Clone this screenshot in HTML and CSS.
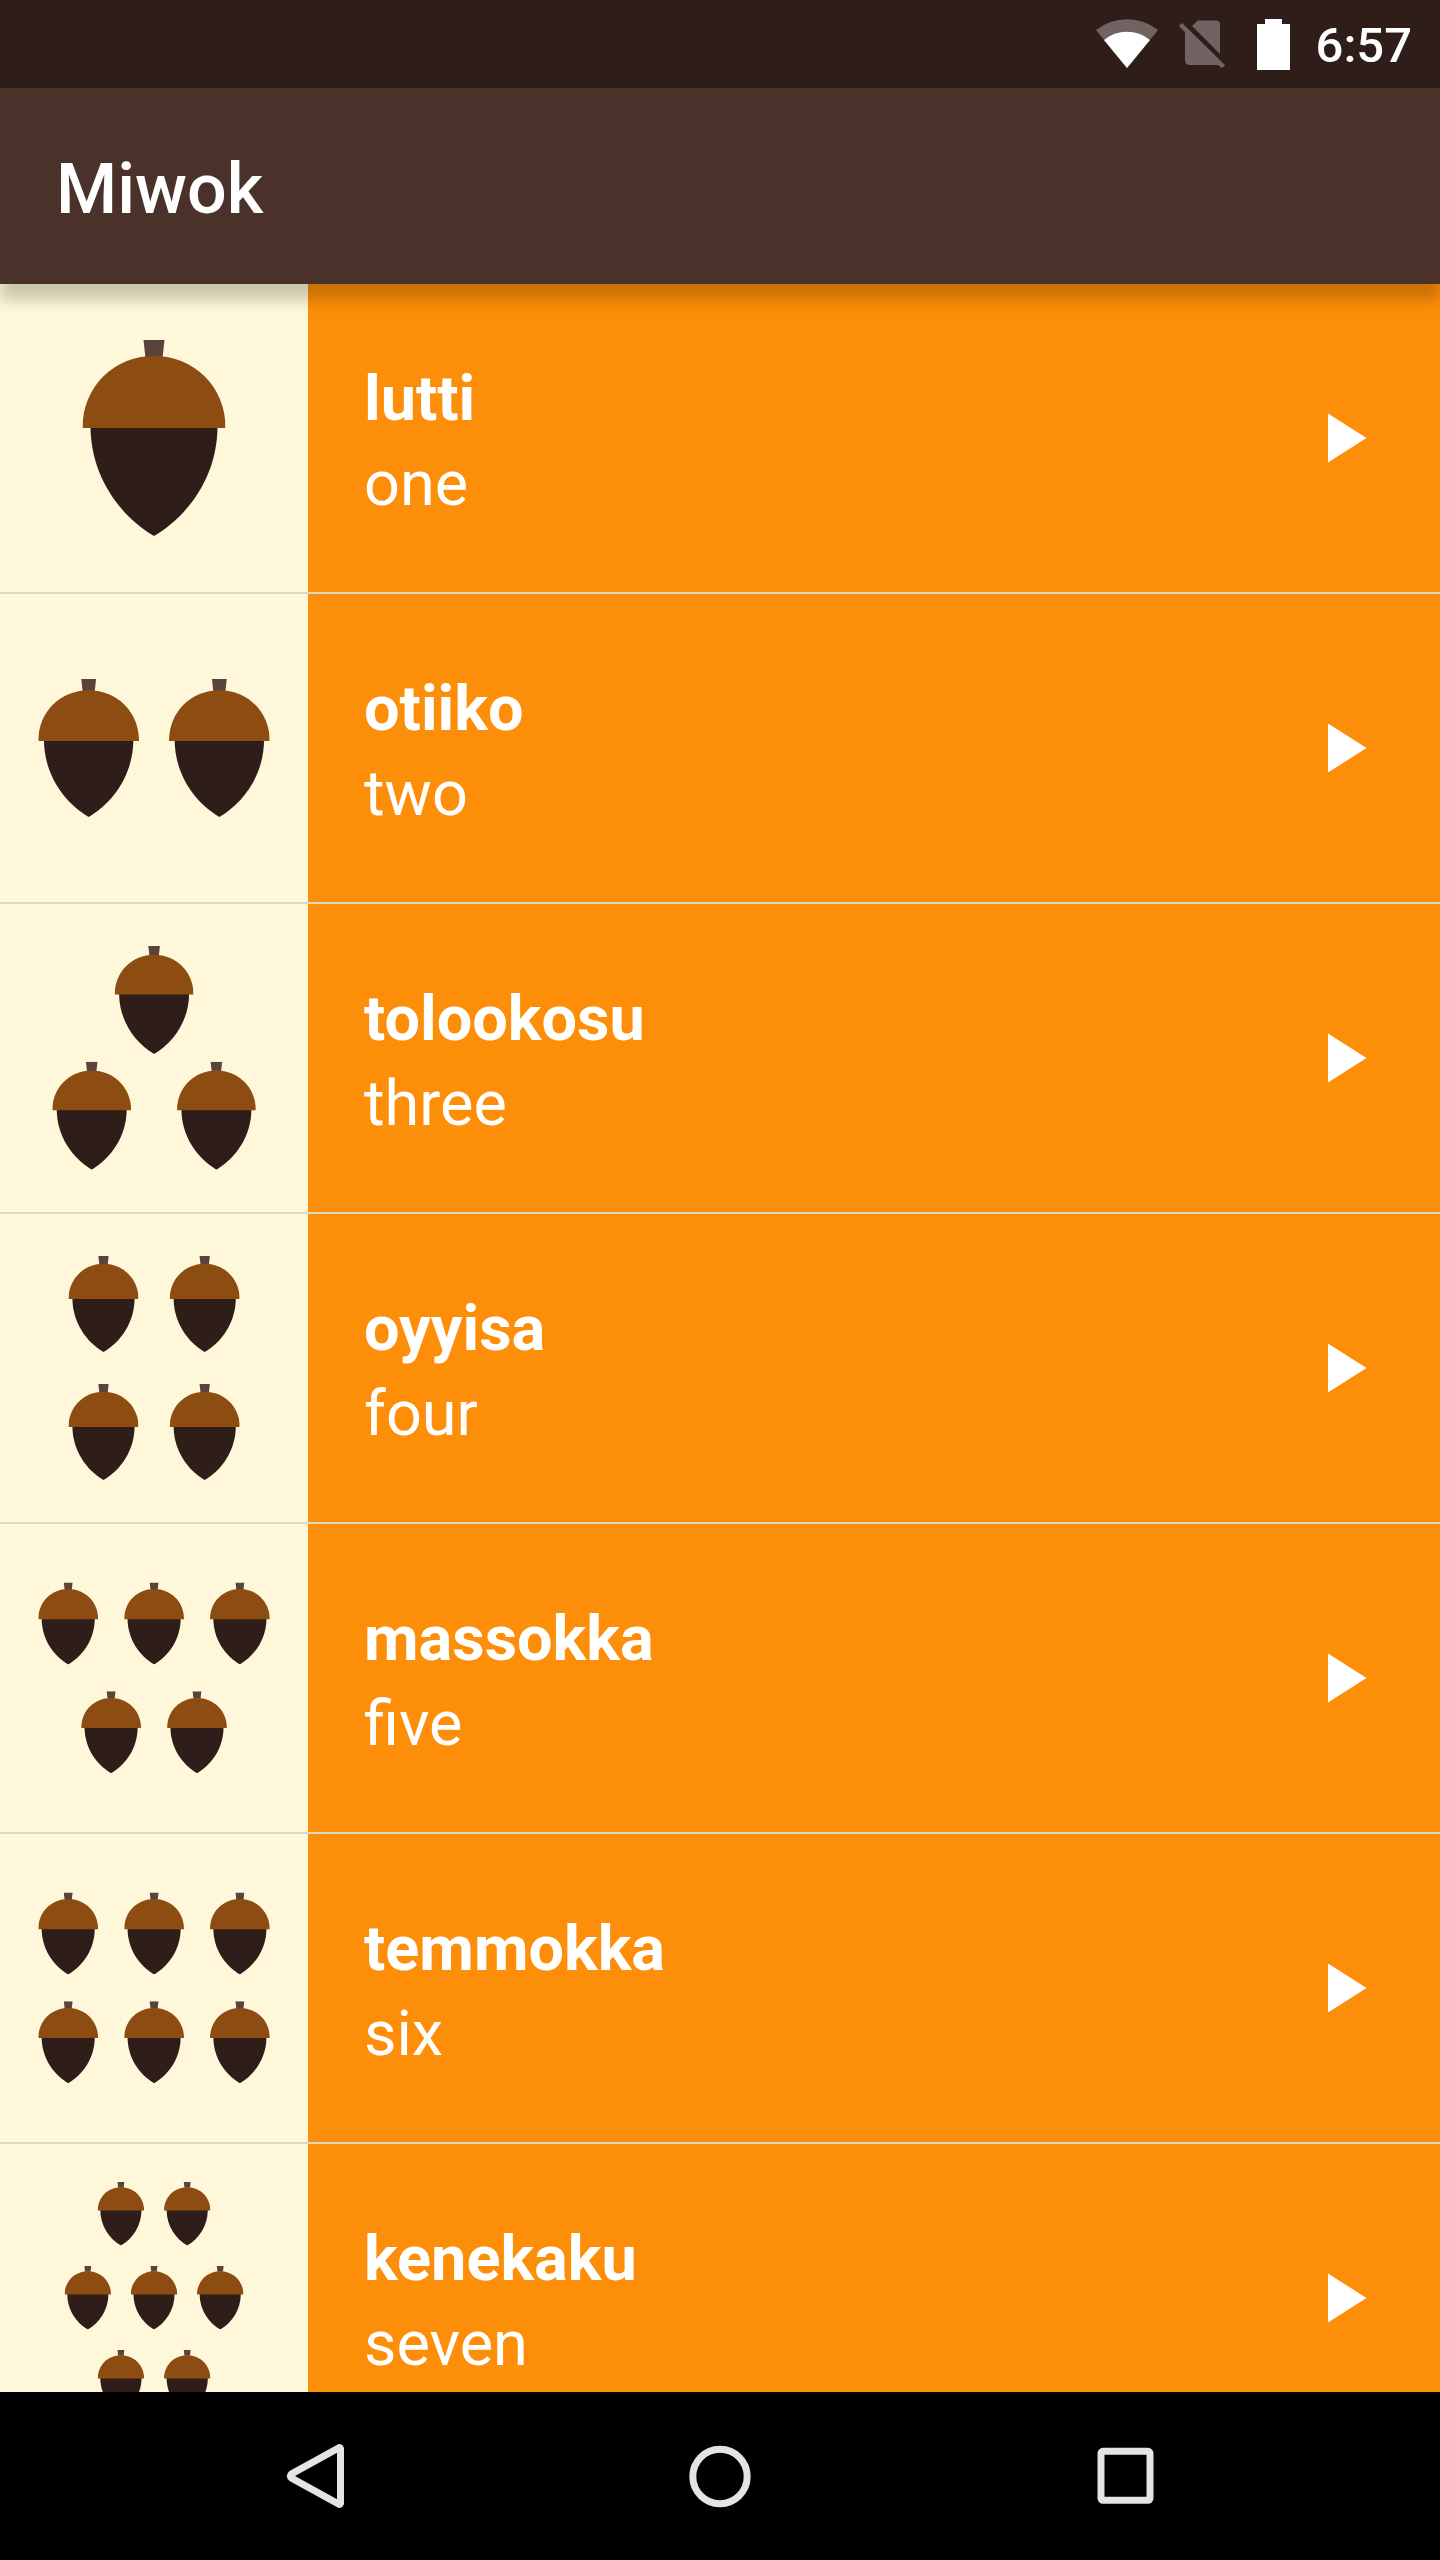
FILE: index.html
```html
<!DOCTYPE html>
<html lang="en">
<head>
<meta charset="utf-8">
<meta name="viewport" content="width=device-width, initial-scale=1">
<title>Miwok</title>
<link rel="stylesheet" href="styles.css">
</head>
<body>
<svg class="sprite" aria-hidden="true">
  <symbol id="acorn" viewBox="0 0 143 196">
    <path fill="#5a433d" d="M61 0h21l-2 18H63z"/>
    <path fill="#2f1d1a" d="M8 86h127c0 49-28 89-63.500 110C36 175 8 135 8 86z"/>
    <path fill="#8d4c12" d="M0 88C0 46 32 16 71.500 16S143 46 143 88z"/>
  </symbol>
  <symbol id="play" viewBox="0 0 24 24"><path fill="#fff" d="M8 5v14l11-7z"/></symbol>
</svg>

<div class="status-bar">
  <svg class="wifi" viewBox="0 0 62 50" aria-label="Wi-Fi">
    <path fill="#726363" d="M0 11A50 50 0 0 1 62 11L31 49z"/>
    <path fill="#fff" d="M8 21A36 36 0 0 1 54 21L31 49z"/>
  </svg>
  <svg class="sim" viewBox="0 0 46 48" aria-label="No SIM">
    <path fill="#726363" d="M3 3L0 6 6 12V40Q6 45 11 45H39L43 48 46 45zM13 6L19 .5H37Q41 .5 41 4V34z"/>
  </svg>
  <svg class="battery" viewBox="0 0 33 51" aria-label="Battery full">
    <path fill="#fff" d="M8 0h17v5h8v46H0V5h8z"/>
  </svg>
  <time class="clock">6:57</time>
</div>

<header class="app-bar"><h1 class="app-title">Miwok</h1></header>

<ul class="words">
  <li class="word">
    <svg class="picture" viewBox="0 0 308 308" aria-hidden="true">
      <use href="#acorn" x="82.500" y="56" width="143" height="196"/>
    </svg>
    <div class="text"><b class="miwok">lutti</b><span class="english">one</span></div>
    <button class="play" aria-label="Play lutti"><svg class="play-icon"><use href="#play"/></svg></button>
  </li>
  <li class="word">
    <svg class="picture" viewBox="0 0 308 308" aria-hidden="true">
      <use href="#acorn" x="38.300" y="85" width="100.700" height="138"/>
      <use href="#acorn" x="169" y="85" width="100.700" height="138"/>
    </svg>
    <div class="text"><b class="miwok">otiiko</b><span class="english">two</span></div>
    <button class="play" aria-label="Play otiiko"><svg class="play-icon"><use href="#play"/></svg></button>
  </li>
  <li class="word">
    <svg class="picture" viewBox="0 0 308 308" aria-hidden="true">
      <use href="#acorn" x="114.700" y="42" width="78.800" height="108"/>
      <use href="#acorn" x="52.300" y="157.700" width="78.800" height="108"/>
      <use href="#acorn" x="177" y="157.700" width="78.800" height="108"/>
    </svg>
    <div class="text"><b class="miwok">tolookosu</b><span class="english">three</span></div>
    <button class="play" aria-label="Play tolookosu"><svg class="play-icon"><use href="#play"/></svg></button>
  </li>
  <li class="word">
    <svg class="picture" viewBox="0 0 308 308" aria-hidden="true">
      <use href="#acorn" x="68.500" y="42" width="70" height="96"/>
      <use href="#acorn" x="169.700" y="42" width="70" height="96"/>
      <use href="#acorn" x="68.500" y="170" width="70" height="96"/>
      <use href="#acorn" x="169.700" y="170" width="70" height="96"/>
    </svg>
    <div class="text"><b class="miwok">oyyisa</b><span class="english">four</span></div>
    <button class="play" aria-label="Play oyyisa"><svg class="play-icon"><use href="#play"/></svg></button>
  </li>
  <li class="word">
    <svg class="picture" viewBox="0 0 308 308" aria-hidden="true">
      <use href="#acorn" x="38.300" y="58.400" width="59.800" height="82"/>
      <use href="#acorn" x="124.200" y="58.400" width="59.800" height="82"/>
      <use href="#acorn" x="210" y="58.400" width="59.800" height="82"/>
      <use href="#acorn" x="81.200" y="167.300" width="59.800" height="82"/>
      <use href="#acorn" x="167.100" y="167.300" width="59.800" height="82"/>
    </svg>
    <div class="text"><b class="miwok">massokka</b><span class="english">five</span></div>
    <button class="play" aria-label="Play massokka"><svg class="play-icon"><use href="#play"/></svg></button>
  </li>
  <li class="word">
    <svg class="picture" viewBox="0 0 308 308" aria-hidden="true">
      <use href="#acorn" x="38.300" y="58.400" width="59.800" height="82"/>
      <use href="#acorn" x="124.200" y="58.400" width="59.800" height="82"/>
      <use href="#acorn" x="210" y="58.400" width="59.800" height="82"/>
      <use href="#acorn" x="38.300" y="167.300" width="59.800" height="82"/>
      <use href="#acorn" x="124.200" y="167.300" width="59.800" height="82"/>
      <use href="#acorn" x="210" y="167.300" width="59.800" height="82"/>
    </svg>
    <div class="text"><b class="miwok">temmokka</b><span class="english">six</span></div>
    <button class="play" aria-label="Play temmokka"><svg class="play-icon"><use href="#play"/></svg></button>
  </li>
  <li class="word">
    <svg class="picture" viewBox="0 0 308 308" aria-hidden="true">
      <use href="#acorn" x="97.700" y="38" width="46.400" height="63.600"/>
      <use href="#acorn" x="164" y="38" width="46.400" height="63.600"/>
      <use href="#acorn" x="64.600" y="122" width="46.400" height="63.600"/>
      <use href="#acorn" x="130.800" y="122" width="46.400" height="63.600"/>
      <use href="#acorn" x="197" y="122" width="46.400" height="63.600"/>
      <use href="#acorn" x="97.700" y="206" width="46.400" height="63.600"/>
      <use href="#acorn" x="164" y="206" width="46.400" height="63.600"/>
    </svg>
    <div class="text"><b class="miwok">kenekaku</b><span class="english">seven</span></div>
    <button class="play" aria-label="Play kenekaku"><svg class="play-icon"><use href="#play"/></svg></button>
  </li>
</ul>

<nav class="nav-bar">
  <button class="nav-button" aria-label="Back">
    <svg class="nav-icon" viewBox="0 0 84 84"><path d="M67.500 14.500V69.500Q67 71 65.500 70L18.500 44Q16 42 18.500 40L65.500 14Q67 13 67.500 14.500z"/></svg>
  </button>
  <button class="nav-button" aria-label="Home">
    <svg class="nav-icon" viewBox="0 0 84 84"><circle cx="42" cy="42.500" r="27.200"/></svg>
  </button>
  <button class="nav-button" aria-label="Recent apps">
    <svg class="nav-icon" viewBox="0 0 84 84"><rect x="18" y="17.300" width="49" height="49" rx="2"/></svg>
  </button>
</nav>
</body>
</html>
```
FILE: styles.css
```css
* {
  box-sizing: border-box;
}

body {
  margin: 0;
  height: 100vh;
  display: flex;
  flex-direction: column;
  background: #fd8e09;
  color: #fff;
  font-family: Roboto, sans-serif;
}

svg {
  display: block;
  flex: none;
}

button {
  border: 0;
  padding: 0;
  background: none;
  cursor: pointer;
}

.sprite {
  display: none;
}

/* System status bar */
.status-bar {
  flex: none;
  height: 88px;
  display: flex;
  justify-content: flex-end;
  align-items: center;
  padding-right: 28px;
  background: #2f1d1a;
}

.wifi {
  width: 62px;
  height: 50px;
  margin-right: 21px;
}

.sim {
  width: 46px;
  height: 48px;
  margin-right: 32px;
}

.battery {
  width: 33px;
  height: 51px;
  margin-right: 26px;
}

.clock {
  padding-top: 4px;
  font-size: 49px;
  font-weight: 500;
  line-height: 58px;
}

/* App bar */
.app-bar {
  flex: none;
  height: 196px;
  display: flex;
  align-items: center;
  padding: 6px 56px 0;
  background: #4a312a;
  box-shadow: 0 16px 14px rgba(0, 0, 0, 0.2);
  z-index: 1;
}

.app-title {
  margin: 0;
  font-size: 70px;
  font-weight: 500;
  line-height: 82px;
}

/* Word list */
.words {
  flex: 1;
  min-height: 0;
  margin: 0;
  padding: 0;
  list-style: none;
  overflow-y: auto;
  scrollbar-width: none;
}

.word {
  display: flex;
  align-items: center;
}

.word + .word {
  border-top: 2px solid #dfd8be;
}

.picture {
  width: 308px;
  height: 308px;
  background: #fff7da;
}

.text {
  flex: 1;
  min-width: 0;
  display: flex;
  flex-direction: column;
  padding: 6px 56px 0;
  font-size: 63px;
  line-height: 85px;
}

.miwok {
  font-weight: 700;
}

.play {
  margin-right: 56px;
}

.play-icon {
  width: 84px;
  height: 84px;
}

/* System navigation bar */
.nav-bar {
  flex: none;
  height: 168px;
  display: flex;
  padding: 0 112px;
  background: #000;
}

.nav-button {
  flex: 1;
  display: flex;
  justify-content: center;
  align-items: center;
}

.nav-icon {
  width: 84px;
  height: 84px;
  fill: none;
  stroke: #e4e4e4;
  stroke-width: 7;
}
```
